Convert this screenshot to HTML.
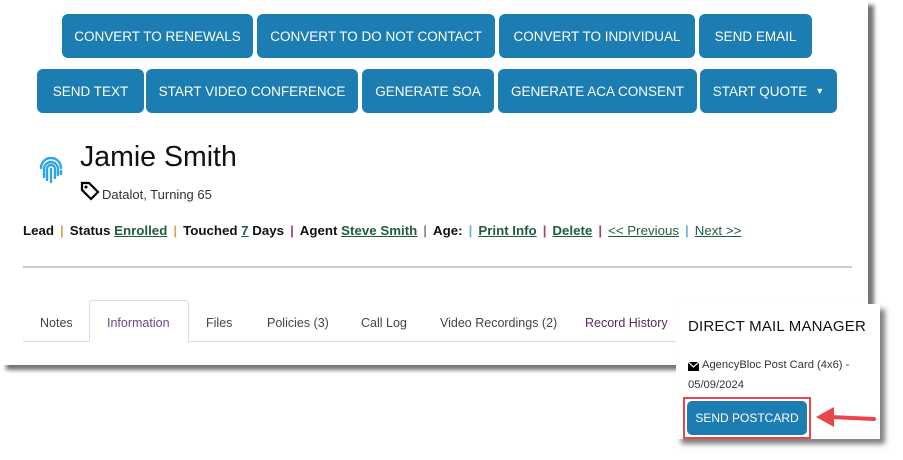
<!DOCTYPE html>
<html><head><meta charset="utf-8"><style>
*{margin:0;padding:0;box-sizing:border-box}
body{width:903px;height:460px;background:#fff;position:relative;overflow:hidden;font-family:"Liberation Sans",sans-serif;color:#111}
.card{position:absolute;left:0;top:0;width:868px;height:365px;background:#fff;box-shadow:6px 5px 4px rgba(0,0,0,.55)}
.btn{position:absolute;height:44px;background:#1b7db2;color:#fff;border-radius:6px;font-size:13.5px;display:flex;align-items:center;justify-content:center}
.t{position:absolute;white-space:nowrap}
a{color:#1f5e3b;text-decoration:underline}
.sep{margin:0 6px;color:#e0a050}
.tab{position:absolute;top:316px;font-size:12.5px;color:#444}
.popup{position:absolute;left:676px;top:304px;width:204px;height:135px;background:#fff;box-shadow:5px 5px 5px rgba(0,0,0,.5)}
</style></head><body>
<div class="card">
<div class="btn" style="left:62px;top:14px;width:191px">CONVERT TO RENEWALS</div>
<div class="btn" style="left:257px;top:14px;width:238px">CONVERT TO DO NOT CONTACT</div>
<div class="btn" style="left:499px;top:14px;width:196px">CONVERT TO INDIVIDUAL</div>
<div class="btn" style="left:699px;top:14px;width:113px">SEND EMAIL</div>
<div class="btn" style="left:37px;top:69px;width:107px">SEND TEXT</div>
<div class="btn" style="left:146px;top:69px;width:212px">START VIDEO CONFERENCE</div>
<div class="btn" style="left:362px;top:69px;width:132px">GENERATE SOA</div>
<div class="btn" style="left:498px;top:69px;width:199px">GENERATE ACA CONSENT</div>
<div class="btn" style="left:700px;top:69px;width:137px">START QUOTE <span style="font-size:9px;margin-left:8px">▼</span></div>

<svg style="position:absolute;left:37px;top:157px" width="28" height="28" viewBox="0 0 28 28" fill="none" stroke="#2ba6e6" stroke-width="2.4" stroke-linecap="round">
<path d="M4 11a10 10 0 0 1 20 0"/><path d="M7 20v-8a7 7 0 0 1 14 0v6"/><path d="M10 23v-11a4 4 0 0 1 8 0v9"/><path d="M14 12v13"/><path d="M24 14v3"/></svg>
<div class="t" style="left:80px;top:141px;font-size:28.5px;color:#111">Jamie Smith</div>
<svg style="position:absolute;left:80px;top:181px" width="20" height="20" viewBox="0 0 20 20"><path d="M2 2h7l9 9-7 7-9-9z" fill="none" stroke="#000" stroke-width="2.2"/><circle cx="6" cy="6" r="1.5" fill="#000"/></svg>
<div class="t" style="left:102px;top:187px;font-size:13px;color:#333">Datalot, Turning 65</div>

<div class="t" style="left:23px;top:223px;font-size:13.3px;font-weight:bold">Lead<span class="sep">|</span>Status <a>Enrolled</a><span class="sep">|</span>Touched <a>7</a> Days<span class="sep" style="color:#a04070">|</span>Agent <a>Steve Smith</a><span class="sep" style="color:#888">|</span>Age:<span class="sep" style="color:#6ab0e0">|</span><a>Print Info</a><span class="sep" style="color:#a04070">|</span><a>Delete</a><span class="sep" style="color:#a04070">|</span><a style="font-weight:normal">&lt;&lt; Previous</a><span class="sep" style="color:#6ab0e0">|</span><a style="font-weight:normal">Next &gt;&gt;</a></div>
<div style="position:absolute;left:23px;top:266px;width:829px;height:2px;background:#c9ccd0"></div>

<div style="position:absolute;left:23px;top:341px;width:660px;height:1px;background:#ddd"></div>
<div style="position:absolute;left:89px;top:300px;width:100px;height:42px;border:1px solid #ddd;border-bottom:none;background:#fff;border-radius:3px 3px 0 0"></div>
<div class="tab" style="left:40px">Notes</div>
<div class="tab" style="left:107px;color:#6a4a80">Information</div>
<div class="tab" style="left:206px">Files</div>
<div class="tab" style="left:267px">Policies (3)</div>
<div class="tab" style="left:361px">Call Log</div>
<div class="tab" style="left:440px">Video Recordings (2)</div>
<div class="tab" style="left:585px;color:#5a2a60">Record History</div>
</div>

<div class="popup">
<div class="t" style="left:12px;top:14px;font-size:15px;letter-spacing:.2px;color:#111">DIRECT MAIL MANAGER</div>
<svg style="position:absolute;left:12px;top:58px" width="11" height="9" viewBox="0 0 11 9"><rect width="11" height="9" fill="#000"/><path d="M0 0l5.5 5 5.5-5" stroke="#fff" stroke-width="1.2" fill="none"/></svg>
<div class="t" style="left:26px;top:55px;font-size:11.2px;color:#333">AgencyBloc Post Card (4x6) -</div>
<div class="t" style="left:12px;top:75px;font-size:11.2px;color:#333">05/09/2024</div>
<div style="position:absolute;left:7px;top:93px;width:128px;height:42px;border:2px solid #e8454d"></div>
<div class="btn" style="left:11px;top:97px;width:120px;height:34px;border-radius:5px;font-size:12px">SEND POSTCARD</div>
</div>
<svg style="position:absolute;left:812px;top:403px" width="70" height="30" viewBox="0 0 70 30"><path d="M62 16L18 14" stroke="#e8454d" stroke-width="4" stroke-linecap="round"/><path d="M4 14l18-10v20z" fill="#e8454d"/></svg>
</body></html>
